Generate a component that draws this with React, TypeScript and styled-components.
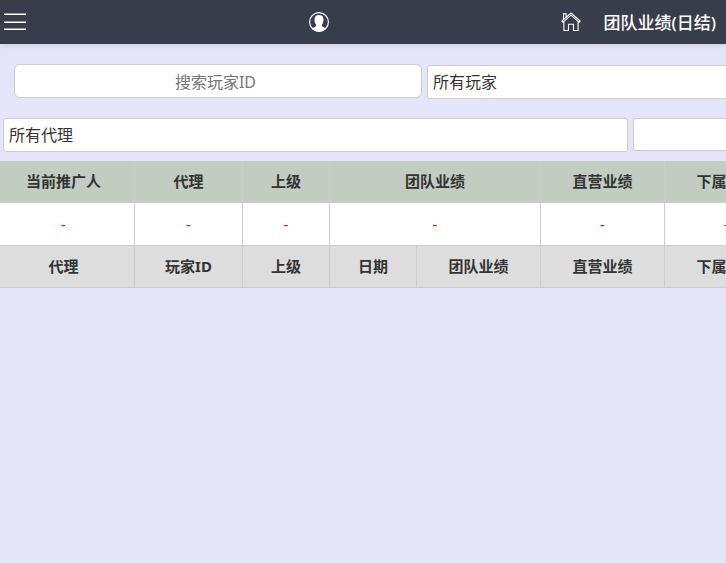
import React from "react";
import styled, { createGlobalStyle } from "styled-components";

const GlobalStyle = createGlobalStyle`
  * { box-sizing: border-box; }
  html, body { margin: 0; min-height: 100%; background: #e5e5fa; }
  body {
    color: #333;
    font-family: "Noto Sans", "Noto Sans CJK SC", sans-serif;
    font-size: 16px;
    overflow-x: hidden;
  }
`;

const Header = styled.header`
  display: grid;
  grid-template-columns: 15fr auto 19fr;
  align-items: center;
  justify-items: start;
  height: 44px;
  padding: 0 10px 0 4px;
  background: #393d4b;
  color: #fff;
  box-shadow: 0 1px 6px #ccc;
`;

const IconButton = styled.button`
  display: block;
  padding: 0;
  border: 0;
  background: none;
  color: inherit;
  line-height: 0;
`;

const HeaderEnd = styled.div`
  display: flex;
  align-items: center;
  justify-self: end;
  gap: 21px;
`;

const HomeLink = styled.a`
  color: inherit;
  line-height: 0;
`;

const Title = styled.h1`
  margin: 0;
  padding-top: 2px;
  font-size: 17px;
  font-weight: 500;
  line-height: 24px;
  white-space: nowrap;
`;

const Filters = styled.form`
  overflow: hidden;
  padding: 20px 0 9px;
`;

const FilterRow = styled.div<{ $inset: number }>`
  display: flex;
  gap: 5px;
  padding-left: ${(p) => p.$inset}px;
  & + & { margin-top: 19px; }
`;

const SearchInput = styled.input`
  flex: 0 0 408px;
  height: 34px;
  padding: 2px 5px 0 0;
  border: 1px solid #ccc;
  border-radius: 6px;
  background: #fff;
  color: #333;
  font: inherit;
  text-align: center;
  &::placeholder { color: #757575; opacity: 1; }
`;

const Select = styled.select`
  flex: 0 0 625px;
  height: 34px;
  padding: 0 5px 1px;
  border: 1px solid #ccc;
  border-radius: 3px;
  background: #fff;
  color: #333;
  font: inherit;
  appearance: none;
`;

const PlayerSelect = styled(Select)`
  flex-basis: 408px;
  margin-top: 1px;
`;

const DateInput = styled.input`
  flex: 0 0 408px;
  height: 33px;
  border: 1px solid #ccc;
  border-radius: 3px;
  background: #fff;
  font: inherit;
`;

const TableArea = styled.div`
  overflow: hidden;
`;

const Table = styled.table`
  width: 796px;
  margin-left: -7px;
  table-layout: fixed;
  border-collapse: separate;
  border-spacing: 0;
  font-size: 15px;
  line-height: 20px;
  text-align: center;
`;

const Col = styled.col<{ $width: number }>`
  width: ${(p) => p.$width}px;
`;

const HeadCell = styled.th<{ $tone: "green" | "grey" }>`
  height: 42px;
  padding: 0 0 1px;
  border: solid #ccc;
  border-width: 0 1px 1px 0;
  background: ${(p) => (p.$tone === "green" ? "#c2ccc0" : "#ddd")};
  font-weight: 700;
  white-space: nowrap;
`;

const ValueCell = styled.td`
  height: 43px;
  padding: 0;
  border: solid #ccc;
  border-width: 0 1px 1px 0;
  background: #fff;
  color: #f00;
`;

const columns = [142, 108, 87, 87, 124, 124, 124];
const summary = ["当前推广人", "代理", "上级", "团队业绩", "直营业绩", "下属业绩"];
const details = ["代理", "玩家ID", "上级", "日期", "团队业绩", "直营业绩", "下属业绩"];

export default function App() {
  return (
    <>
      <GlobalStyle />
      <Header>
        <IconButton type="button" aria-label="菜单">
          <svg width="22" height="18" viewBox="0 0 22 18" fill="none" stroke="currentColor">
            <path d="M0 1.300h22M0 9.300h22M0 16.300h22" strokeWidth="1.5" />
          </svg>
        </IconButton>
        <IconButton type="button" aria-label="用户">
          <svg width="22" height="22" viewBox="0 0 22 22" fill="none">
            <circle cx="11" cy="11" r="9.4" stroke="currentColor" strokeWidth="1.2" />
            <path
              fill="currentColor"
              d="M11 3.900c-3.200 0-4.500 1.900-4.500 4.500 0 2.300.6 4 1.500 5.200v1.400c-.3.900-2.300 1.400-4.400 2.200 1.700 2.100 4.400 3.400 7.400 3.400s5.700-1.300 7.400-3.400c-2.100-.8-4.100-1.300-4.400-2.200v-1.400c.9-1.200 1.500-2.900 1.500-5.200 0-2.600-1.300-4.500-4.500-4.500Z"
            />
          </svg>
        </IconButton>
        <HeaderEnd>
          <HomeLink href="#" aria-label="首页">
            <svg width="21" height="20" viewBox="0 0 21 20" fill="none" stroke="currentColor" strokeWidth="1.1">
              <path d="M2.900 9.700v8.800h4.600v-6.200h5v6.200h4.600V9.700" />
              <path d="M.8 9.100 10 1l9.200 8.100-1.100 1.200L10 3.200l-8.100 7.100Z" />
              <path d="M2.500 7.500V1.800h2.600v3.400" />
            </svg>
          </HomeLink>
          <Title>团队业绩(日结)</Title>
        </HeaderEnd>
      </Header>
      <main>
        <Filters>
          <FilterRow $inset={14}>
            <SearchInput type="text" placeholder="搜索玩家ID" aria-label="搜索玩家ID" />
            <PlayerSelect aria-label="玩家">
              <option>所有玩家</option>
            </PlayerSelect>
          </FilterRow>
          <FilterRow $inset={3}>
            <Select aria-label="代理">
              <option>所有代理</option>
            </Select>
            <DateInput type="text" aria-label="日期" />
          </FilterRow>
        </Filters>
        <TableArea>
          <Table>
            <colgroup>
              {columns.map((width, i) => (
                <Col key={i} $width={width} />
              ))}
            </colgroup>
            <tbody>
              <tr>
                {summary.map((label, i) => (
                  <HeadCell key={label} scope="col" $tone="green" colSpan={i === 3 ? 2 : 1}>
                    {label}
                  </HeadCell>
                ))}
              </tr>
              <tr>
                {summary.map((label, i) => (
                  <ValueCell key={label} colSpan={i === 3 ? 2 : 1}>-</ValueCell>
                ))}
              </tr>
              <tr>
                {details.map((label) => (
                  <HeadCell key={label} scope="col" $tone="grey">
                    {label}
                  </HeadCell>
                ))}
              </tr>
            </tbody>
          </Table>
        </TableArea>
      </main>
    </>
  );
}
